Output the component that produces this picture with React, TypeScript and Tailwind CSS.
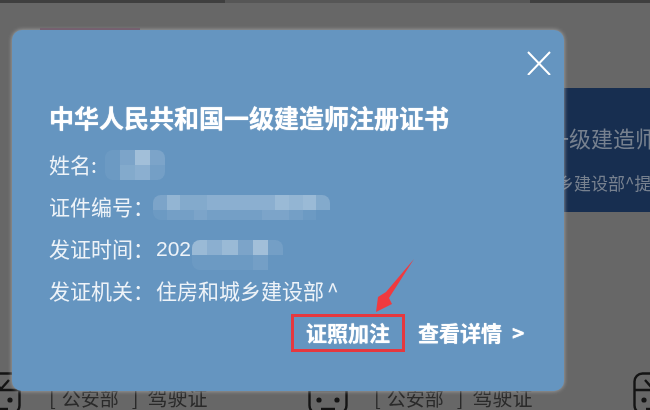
const CJK = "font-['Noto_Sans_CJK_SC','Noto_Sans',sans-serif]";

// pixelated privacy blur: a bright upper row of cells and a faint lower row
const Mosaic = ({ top, bottom, size, split }: { top: string[]; bottom: string[]; size: string; split: string }) => (
  <div className={`flex shrink-0 flex-col overflow-hidden rounded-lg blur-[0.6px] ${size}`}>
    <div className={`flex ${split}`}>
      {top.map((c, i) => (
        <div key={i} className={`flex-1 ${c}`} />
      ))}
    </div>
    <div className="flex flex-1">
      {bottom.map((c, i) => (
        <div key={i} className={`flex-1 ${c}`} />
      ))}
    </div>
  </div>
);

const LicenceIcon = ({ className }: { className: string }) => (
  <svg className={className} viewBox="0 0 40 40" fill="none" stroke="#141414" strokeWidth="2.4">
    <rect x="1.5" y="1.5" width="37" height="40" rx="8" />
    <path d="M1.5 18h37M12 8l8 9 8-9" />
    <circle cx="11" cy="28" r="2.6" fill="#141414" stroke="none" />
    <circle cx="29" cy="28" r="2.6" fill="#141414" stroke="none" />
    <path d="M13 37h14" />
  </svg>
);

const LicenceLabel = () => (
  <div className="flex w-[159px] items-center whitespace-nowrap text-[20px] leading-[24px] text-[#2a2a2a]">
    <span>[</span>
    <span className="ml-[6px] text-[19px]">公安部</span>
    <span className="ml-[13px]">]</span>
    <span className="ml-[9px]">驾驶证</span>
  </div>
);

export default function App() {
  return (
    <div className={`relative flex h-[410px] w-[650px] flex-col overflow-hidden bg-[#676767] blur-[0.35px] ${CJK}`}>
      <div className="flex h-[3px]">
        <div className="w-[225px] bg-[#3f3f3f]" />
        <div className="w-[305px] bg-[#565656]" />
        <div className="flex-1 bg-[#3f3f3f]" />
      </div>

      {/* page behind the overlay */}
      <div className="ml-auto mt-[85px] flex h-[124px] w-[200px] flex-col bg-[#172e50] pl-[97px] text-[#77818f]">
        <div className="mt-[35px] whitespace-nowrap text-[22px] leading-[28px]">一级建造师</div>
        <div className="ml-[10px] mt-[20px] whitespace-nowrap text-[17px] leading-[24px]">乡建设部^提</div>
      </div>
      <div className="mt-auto flex h-[38px] items-end">
        <LicenceIcon className="ml-[-19px] h-[40px] w-[40px] shrink-0 self-start" />
        <div className="ml-[28px] shrink-0">
          <LicenceLabel />
        </div>
        <LicenceIcon className="ml-[100px] h-[40px] w-[40px] shrink-0 self-start" />
        <div className="ml-[26px] shrink-0">
          <LicenceLabel />
        </div>
        <LicenceIcon className="ml-[100px] h-[40px] w-[40px] shrink-0 self-start" />
      </div>

      {/* modal */}
      <div className="absolute left-[12px] top-[30px] flex h-[361px] w-[552px] flex-col rounded-[10px] bg-[#6595c0] pl-[37px] text-white shadow-[0_0_4px_#aaa]">
        <div className="absolute left-[28px] top-[-2px] h-[2px] w-[100px] bg-[#75606f]" />
        <button className="absolute right-[13px] top-[21px]">
          <svg className="h-[24px] w-[24px]" viewBox="0 0 24 24" stroke="#fff" strokeWidth="2">
            <path d="M1 1l22 23M23 1L1 24" />
          </svg>
        </button>

        <h2 className="mt-[69px] text-[25px] font-bold leading-[36px] [text-shadow:0_0_1px_#fff]">中华人民共和国一级建造师注册证书</h2>

        <div className="mt-[9px] flex h-[42px] items-center text-[21px] text-[#eef3f8]">
          <span>姓名:</span>
          <Mosaic
            size="ml-[8px] h-[30px] w-[60px]"
            split="h-[15px]"
            top={["bg-white/5", "bg-white/15", "bg-white/40", "bg-white/15"]}
            bottom={["bg-white/5", "bg-white/20", "bg-white/25", "bg-white/10"]}
          />
        </div>
        <div className="flex h-[42px] items-center text-[21px] text-[#eef3f8]">
          <span>证件编号：</span>
          <Mosaic
            size="ml-[-1px] h-[25px] w-[177px]"
            split="h-[15px]"
            top={["bg-white/15", "bg-white/30", "bg-white/20", "bg-white/20", "bg-white/25", "bg-white/25", "bg-white/25", "bg-white/25", "bg-white/25", "bg-white/35", "bg-white/30", "bg-white/35", "bg-white/20"]}
            bottom={["bg-white/5", "bg-white/10", "bg-white/10", "bg-white/15", "bg-white/10", "bg-white/10", "bg-white/10", "bg-white/10", "bg-white/15", "bg-white/15", "bg-white/10", "bg-white/5", "bg-white/0"]}
          />
        </div>
        <div className="flex h-[42px] items-center text-[21px] text-[#eef3f8]">
          <span>发证时间：</span>
          <span className="ml-[2px] font-['Liberation_Sans',sans-serif]">202</span>
          <Mosaic
            size="ml-[1px] mt-[12px] h-[30px] w-[91px]"
            split="h-[15px]"
            top={["bg-white/35", "bg-white/25", "bg-white/35", "bg-white/15", "bg-white/40", "bg-white/10"]}
            bottom={["bg-white/5", "bg-white/5", "bg-white/5", "bg-white/5", "bg-white/10", "bg-white/0"]}
          />
        </div>
        <div className="flex h-[42px] items-center whitespace-nowrap text-[21px] text-[#eef3f8]">
          <span>发证机关：</span>
          <span className="ml-[2px]">住房和城乡建设部</span>
          <span className="ml-[3px]">^</span>
        </div>

        <div className="mt-[2px] flex items-center pl-[242px] font-bold">
          <div className="flex h-[38px] w-[114px] items-center justify-center border-[3px] border-[#e5383f] text-[21px] [text-shadow:0_0_1px_#fff]">证照加注</div>
          <div className="ml-[13px] flex items-center whitespace-nowrap text-[21px] [text-shadow:0_0_1px_#fff]">
            <span>查看详情</span>
            <span className="ml-[10px]">&gt;</span>
          </div>
        </div>

        {/* annotation arrow */}
        <svg className="absolute left-[360px] top-[228px] h-[56px] w-[46px]" viewBox="0 0 46 56" fill="#f03a3f">
          <path d="M42 1L14 34l-8 5-2 15 16-8-3-6z" />
        </svg>
      </div>
    </div>
  );
}
